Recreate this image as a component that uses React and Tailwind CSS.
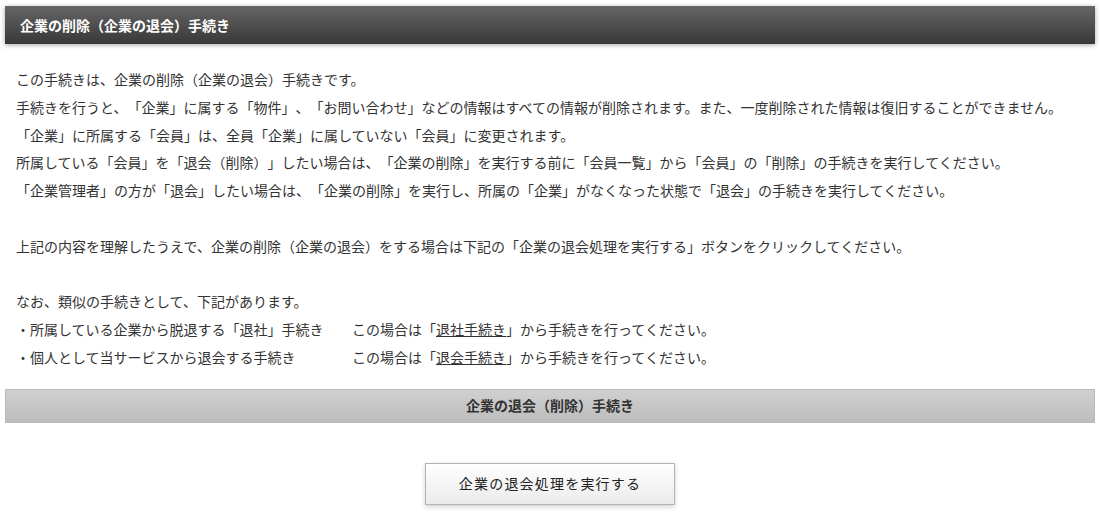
export default function App() {
  const font = { fontFamily: '"Noto Sans CJK JP", "Noto Sans", sans-serif' };

  const lines = [
    "この手続きは、企業の削除（企業の退会）手続きです。",
    "手続きを行うと、「企業」に属する「物件」、「お問い合わせ」などの情報はすべての情報が削除されます。また、一度削除された情報は復旧することができません。",
    "「企業」に所属する「会員」は、全員「企業」に属していない「会員」に変更されます。",
    "所属している「会員」を「退会（削除）」したい場合は、「企業の削除」を実行する前に「会員一覧」から「会員」の「削除」の手続きを実行してください。",
    "「企業管理者」の方が「退会」したい場合は、「企業の削除」を実行し、所属の「企業」がなくなった状態で「退会」の手続きを実行してください。",
  ];

  return (
    <div
      className="min-h-screen bg-white px-[5px] pt-[6px] text-[14px] text-[#333] [text-spacing-trim:space-all]"
      style={font}
    >
      {/* Title bar */}
      <div className="h-[38px] flex items-center px-[15px] bg-gradient-to-b from-[#666666] to-[#383838] shadow-[0_1px_5px_rgba(0,0,0,0.35)]">
        <h1 className="text-white font-bold text-[14px]">企業の削除（企業の退会）手続き</h1>
      </div>

      {/* Description */}
      <div className="pt-[22px] px-[11px] leading-[27.8px]">
        {lines.map((l) => (
          <p key={l} className="whitespace-nowrap">{l}</p>
        ))}
        <p>&nbsp;</p>
        <p className="whitespace-nowrap">
          上記の内容を理解したうえで、企業の削除（企業の退会）をする場合は下記の「企業の退会処理を実行する」ボタンをクリックしてください。
        </p>
        <p>&nbsp;</p>
        <p>なお、類似の手続きとして、下記があります。</p>
        <div className="flex">
          <span className="w-[336px]">・所属している企業から脱退する「退社」手続き</span>
          <span>
            この場合は「<a href="#" className="underline">退社手続き</a>」から手続きを行ってください。
          </span>
        </div>
        <div className="flex">
          <span className="w-[336px]">・個人として当サービスから退会する手続き</span>
          <span>
            この場合は「<a href="#" className="underline">退会手続き</a>」から手続きを行ってください。
          </span>
        </div>
      </div>

      {/* Section bar */}
      <div className="mt-[17px] h-[34px] flex items-center justify-center border border-[#b9b9b9] bg-gradient-to-b from-[#d0d0d0] to-[#bdbdbd]">
        <h2 className="font-bold text-[14px] text-[#333]">企業の退会（削除）手続き</h2>
      </div>

      {/* Action */}
      <div className="flex justify-center pt-[40px]">
        <button className="w-[250px] h-[42px] border border-[#b3b3b3] bg-gradient-to-b from-white to-[#ebebeb] shadow-[0_2px_5px_rgba(0,0,0,0.18)] text-[14px] tracking-[1.2px] text-[#222]">
          企業の退会処理を実行する
        </button>
      </div>
    </div>
  );
}
